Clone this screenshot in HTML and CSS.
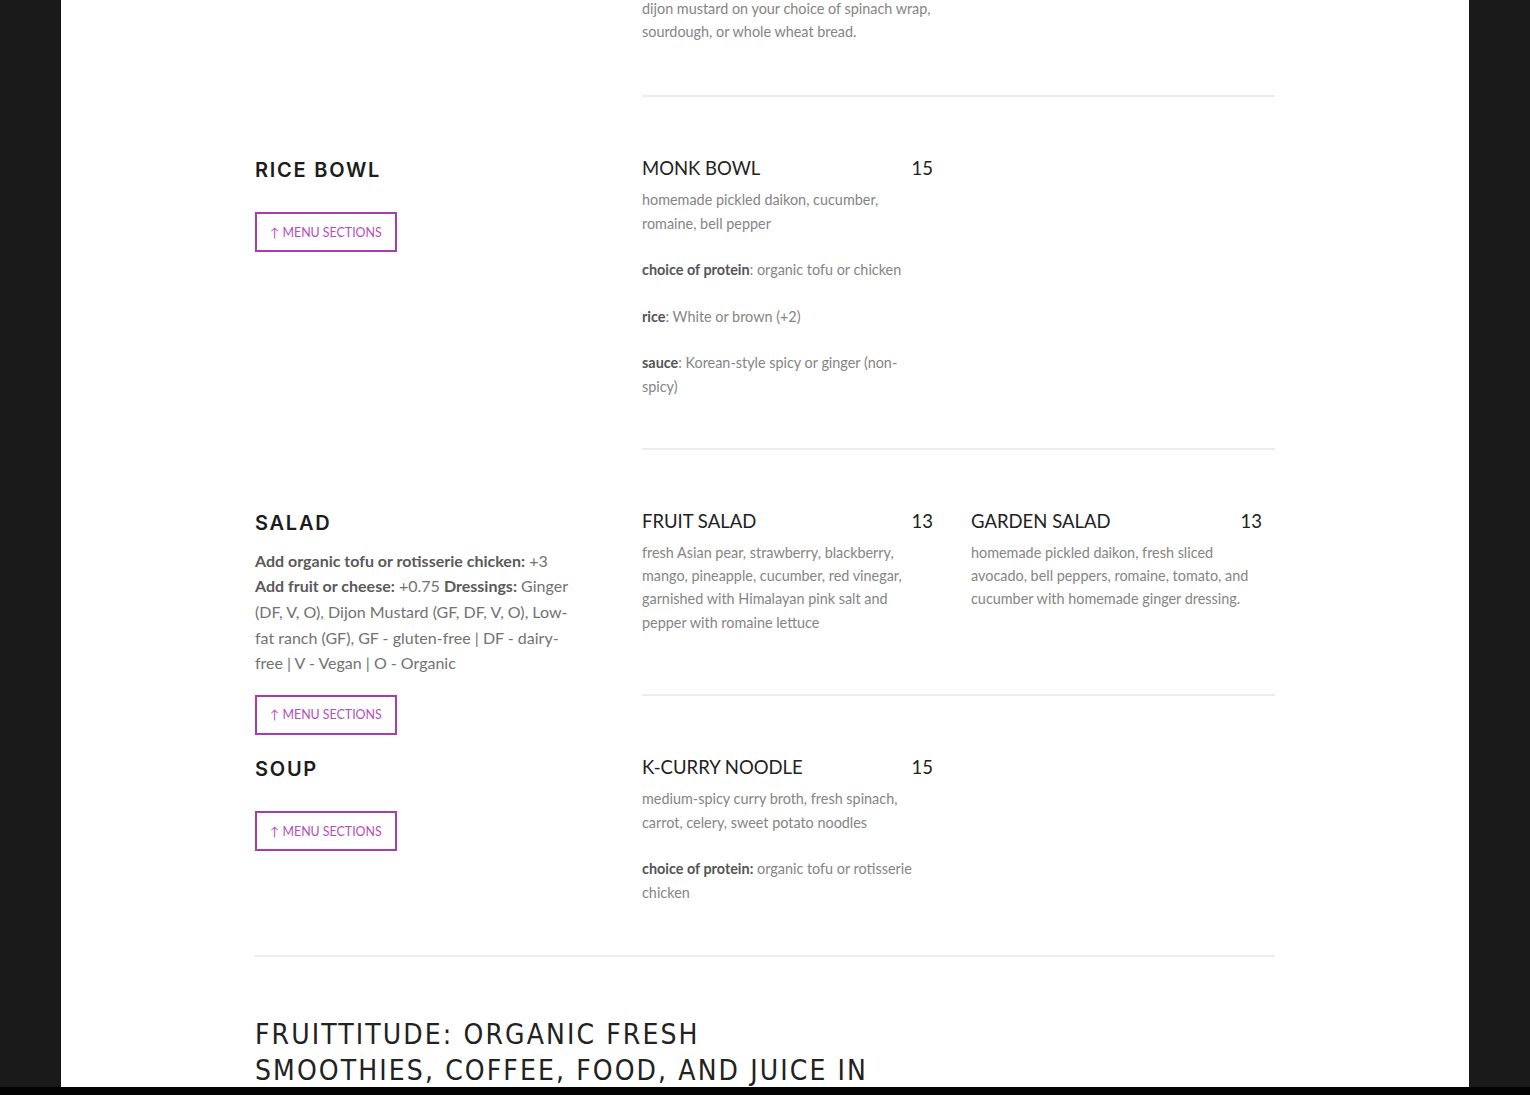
FILE: index.html
```html
<!DOCTYPE html>
<html lang="en">
<head>
<meta charset="utf-8">
<title>Fruittitude Menu</title>
<link rel="stylesheet" href="styles.css">
</head>
<body>
<div class="page">
  <div class="container">
    <div class="menu">
      <section class="menu-section menu-section--continued">
        <div class="side"></div>
        <div class="main">
          <div class="items">
            <div class="item">
              <div class="item-desc">
                <p>dijon mustard on your choice of spinach wrap, sourdough, or whole wheat bread.</p>
              </div>
            </div>
          </div>
        </div>
      </section>

      <section class="menu-section">
        <div class="side">
          <h2 class="sec-title">Rice Bowl</h2>
          <a class="jump" href="#">↑ Menu Sections</a>
        </div>
        <div class="main">
          <div class="items">
            <div class="item">
              <div class="item-head"><span class="item-name">MONK BOWL</span><span class="item-price">15</span></div>
              <div class="item-desc">
                <p>homemade pickled daikon, cucumber, romaine, bell pepper</p>
                <p><strong>choice of protein</strong>: organic tofu or chicken</p>
                <p><strong>rice</strong>: White or brown (+2)</p>
                <p><strong>sauce</strong>: Korean-style spicy or ginger (non-spicy)</p>
              </div>
            </div>
          </div>
        </div>
      </section>

      <section class="menu-section">
        <div class="side">
          <h2 class="sec-title">Salad</h2>
          <p class="sec-note"><strong>Add organic tofu or rotisserie chicken:</strong> +3 <strong>Add fruit or cheese:</strong> +0.75 <strong>Dressings:</strong> Ginger (DF, V, O), Dijon Mustard (GF, DF, V, O), Low-fat ranch (GF), GF - gluten-free | DF - dairy-free | V - Vegan | O - Organic</p>
          <a class="jump" href="#">↑ Menu Sections</a>
        </div>
        <div class="main main--roomy">
          <div class="items">
            <div class="item">
              <div class="item-head"><span class="item-name">FRUIT SALAD</span><span class="item-price">13</span></div>
              <div class="item-desc">
                <p>fresh Asian pear, strawberry, blackberry, mango, pineapple, cucumber, red vinegar, garnished with Himalayan pink salt and pepper with romaine lettuce</p>
              </div>
            </div>
            <div class="item">
              <div class="item-head"><span class="item-name">GARDEN SALAD</span><span class="item-price">13</span></div>
              <div class="item-desc">
                <p>homemade pickled daikon, fresh sliced avocado, bell peppers, romaine, tomato, and cucumber with homemade ginger dressing.</p>
              </div>
            </div>
          </div>
        </div>
      </section>

      <section class="menu-section">
        <div class="side">
          <h2 class="sec-title">Soup</h2>
          <a class="jump" href="#">↑ Menu Sections</a>
        </div>
        <div class="main main--last">
          <div class="items">
            <div class="item">
              <div class="item-head"><span class="item-name">K-CURRY NOODLE</span><span class="item-price">15</span></div>
              <div class="item-desc">
                <p>medium-spicy curry broth, fresh spinach, carrot, celery, sweet potato noodles</p>
                <p><strong>choice of protein:</strong> organic tofu or rotisserie chicken</p>
              </div>
            </div>
          </div>
        </div>
      </section>
    </div>
    <hr class="end-rule">
    <h1 class="site-title">Fruittitude: Organic Fresh Smoothies, Coffee, Food, and Juice in</h1>
  </div>
</div>
<div class="bottom-bar"></div>
</body>
</html>
```
FILE: styles.css
```css
html, body {
  margin: 0;
  padding: 0;
}

body {
  background: #1a1a1a;
  height: 1095px;
  overflow: hidden;
  font-family: Lato, "Open Sans", sans-serif;
}

.page {
  margin: 0 61px;
  background: #ffffff;
  height: 1087px;
  overflow: hidden;
}

.bottom-bar {
  height: 8px;
  background: #030303;
}

.container {
  width: 1020px;
  margin: 0 auto;
}

/* ---------- sections ---------- */
.menu-section {
  display: flex;
  padding-top: 58px;
}

.menu-section--continued {
  padding-top: 0;
  margin-top: -3.5px;
}

.side {
  flex: 0 0 387px;
  height: 0;
  overflow: visible;
}

.main {
  flex: 1;
  padding-bottom: 26.5px;
  border-bottom: 2px solid #ececec;
}

.menu-section--continued .main {
  padding-bottom: 29px;
}

.main--roomy {
  padding-bottom: 37px;
}

.main--last {
  padding-bottom: 28.2px;
  border-bottom: 0;
}

/* ---------- side column ---------- */
.sec-title {
  margin: 0 0 12px;
  padding-top: 2px;
  font-family: Inter, "Open Sans", sans-serif;
  font-weight: 600;
  font-size: 20px;
  line-height: 26px;
  letter-spacing: 1.75px;
  text-transform: uppercase;
  color: #1c1c1c;
}

.sec-note {
  margin: 0 0 19px;
  max-width: 322px;
  font-size: 16px;
  line-height: 25.6px;
  color: #727272;
}

.sec-note strong {
  font-weight: 700;
  color: #5a5a5a;
}

.sec-title + .jump {
  margin-top: 16.7px;
}

.jump {
  display: inline-flex;
  align-items: center;
  box-sizing: border-box;
  height: 40px;
  padding: 0 13px;
  border: 2px solid #a83db3;
  color: #b64cc0;
  font-size: 12.4px;
  text-transform: uppercase;
  text-decoration: none;
  white-space: nowrap;
}

/* ---------- items ---------- */
.items {
  display: grid;
  grid-template-columns: 291px 291px;
  column-gap: 38px;
}

.item-head {
  display: flex;
  justify-content: space-between;
  margin-bottom: 7px;
  font-size: 18.5px;
  line-height: 26px;
  color: #222222;
}

.item-desc {
  max-width: 290px;
}

.item-desc p {
  margin: 0 0 23.3px;
  font-size: 14.4px;
  line-height: 23.3px;
  color: #858585;
}

.item-desc strong {
  font-weight: 700;
  color: #555555;
}

/* ---------- footer title ---------- */
.end-rule {
  margin: 0;
  height: 0;
  border: 0;
  border-top: 2px solid #ececec;
}

.site-title {
  margin: 59.5px 0 0;
  max-width: 620px;
  font-family: "DejaVu Sans Condensed", "DejaVu Sans", sans-serif;
  font-weight: 400;
  font-size: 28px;
  line-height: 36px;
  letter-spacing: 2.1px;
  text-transform: uppercase;
  color: #222222;
}
```
